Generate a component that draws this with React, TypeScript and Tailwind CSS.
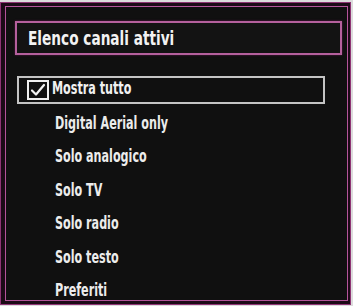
import React from "react";

const items = [
  "Digital Aerial only",
  "Solo analogico",
  "Solo TV",
  "Solo radio",
  "Solo testo",
  "Preferiti",
];

const font = { fontFamily: '"DejaVu Sans Condensed", "Liberation Sans", sans-serif' };

export default function App() {
  return (
    <div className="w-[353px] h-[306px] bg-[#dcdcdc] pt-[2px] overflow-hidden" style={font}>
      <div className="w-[351px] h-[303px] bg-[#1c0a17] border border-[#8e3474] pt-[3px] pl-[4px] pr-[2px] pb-[3px] flex">
        <div className="flex-1 border border-[#b4549a] bg-[#101010] flex flex-col pl-[9px] pr-[5px] pt-[14px]">
          <div className="h-[37px] border-2 border-[#b5609d] bg-[#131313] flex items-center pl-[11px] shadow-[0_0_2px_#5a1a48]">
            <span className="inline-block origin-left scale-x-[0.76] text-[20px] font-bold text-[#f2f2f2] whitespace-nowrap">
              Elenco canali attivi
            </span>
          </div>

          <div className="mt-[18px] flex flex-col pl-[2px] pr-[17px]">
            <div className="h-[33.5px] flex items-center">
              <div className="w-full h-[28px] border-2 border-[#c4c4c4] flex items-center pl-[8px]">
                <div className="w-[22px] h-[20px] border-2 border-[#f0f0f0] flex items-center justify-center shrink-0">
                  <svg width="16" height="14" viewBox="0 0 16 14" fill="none">
                    <path d="M2 7.5 L6 11.5 L14 2" stroke="#f4f4f4" strokeWidth="2.2" strokeLinecap="round" strokeLinejoin="round" />
                  </svg>
                </div>
                <span className="ml-[3px] -mt-[2px] inline-block origin-left scale-x-[0.73] text-[17px] font-bold text-[#f0f0f0] whitespace-nowrap">
                  Mostra tutto
                </span>
              </div>
            </div>
            {items.map((it) => (
              <div key={it} className="h-[33.5px] flex items-center pl-[38px]">
                <span className="inline-block origin-left scale-x-[0.73] text-[17px] font-bold text-[#ececec] whitespace-nowrap">
                  {it}
                </span>
              </div>
            ))}
          </div>
        </div>
      </div>
    </div>
  );
}
